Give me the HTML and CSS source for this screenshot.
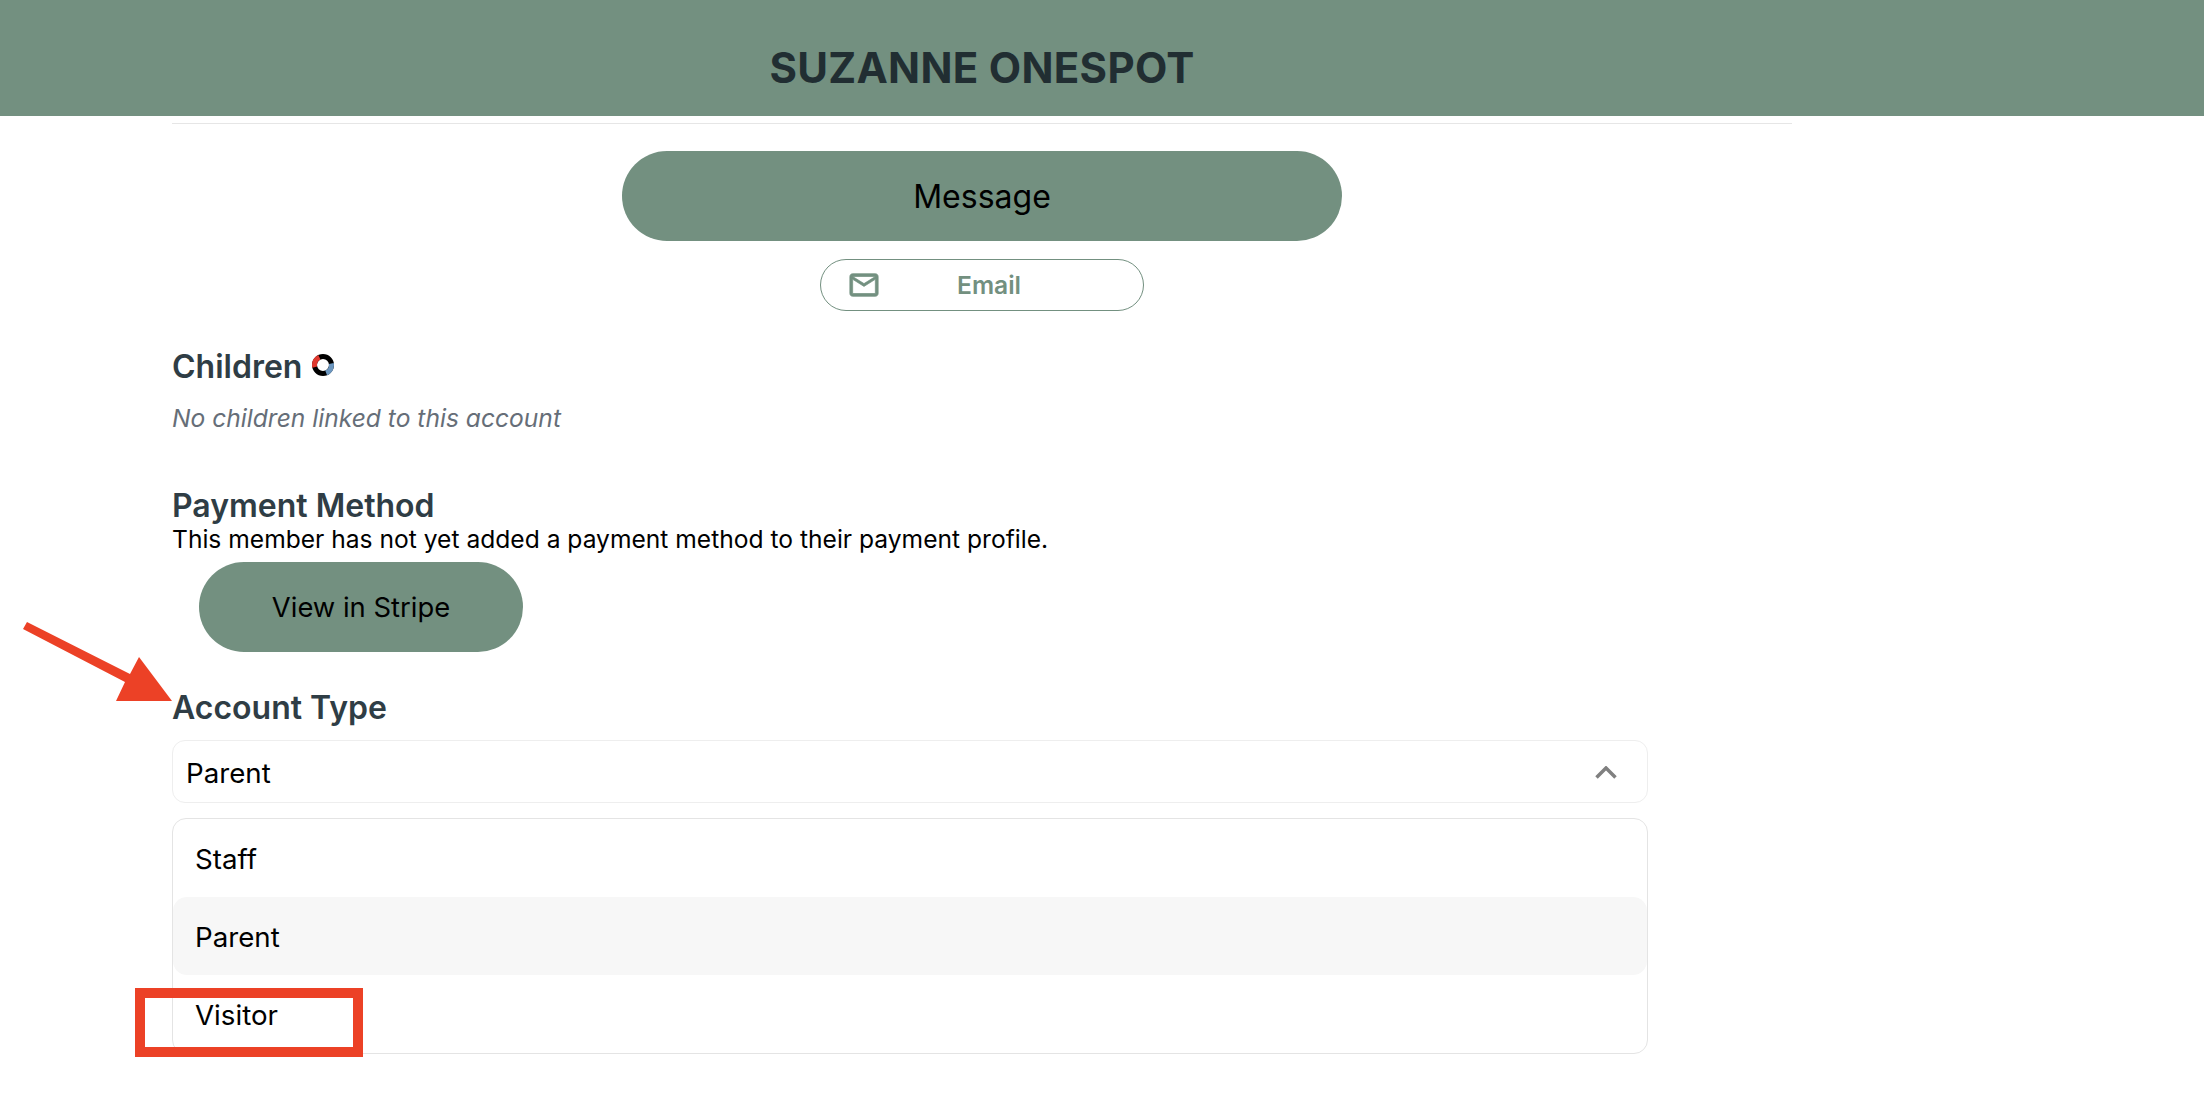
FILE: index.html
```html
<!DOCTYPE html>
<html lang="en">
<head>
<meta charset="utf-8">
<title>Suzanne Onespot</title>
<link rel="stylesheet" href="styles.css">
</head>
<body>
<header class="topbar"><h1 class="topbar-title">SUZANNE ONESPOT</h1></header>
<main class="content">
  <hr class="divider">
  <div class="actions">
    <button class="pill pill-message">Message</button>
    <button class="email-btn">
      <svg class="email-icon" viewBox="0 0 24 24"><path d="M20 4H4c-1.1 0-2 .9-2 2v12c0 1.1.9 2 2 2h16c1.1 0 2-.9 2-2V6c0-1.1-.9-2-2-2zm0 14H4V8l8 5 8-5v10zm-8-7L4 6h16l-8 5z"/></svg>
      <span class="email-label">Email</span>
    </button>
  </div>
  <section class="children">
    <h2 class="heading">Children
      <svg class="spinner" viewBox="0 0 22 22">
        <circle class="ring ring-black" cx="11" cy="11" r="8.5"/>
        <circle class="ring ring-red" cx="11" cy="11" r="8.5" pathLength="100" stroke-dasharray="22 78" stroke-dashoffset="-46"/>
        <circle class="ring ring-blue" cx="11" cy="11" r="8.5" pathLength="100" stroke-dasharray="22 78" stroke-dashoffset="3"/>
      </svg>
    </h2>
    <p class="empty">No children linked to this account</p>
  </section>
  <section class="payment">
    <h2 class="heading">Payment Method</h2>
    <p class="note">This member has not yet added a payment method to their payment profile.</p>
    <button class="pill pill-stripe">View in Stripe</button>
  </section>
  <section class="account">
    <h2 class="heading">Account Type</h2>
    <div class="select">
      <span>Parent</span>
      <svg class="chevron" viewBox="0 0 22 13"><path d="M1.5 11.5 11 2l9.500 9.500"/></svg>
    </div>
    <ul class="options">
      <li class="option">Staff</li>
      <li class="option option-active">Parent</li>
      <li class="option">Visitor</li>
    </ul>
  </section>
</main>
<svg class="annotation-arrow" viewBox="0 0 180 90"><path d="M27 0 23 7 125 60 116 79H172L139 35 130 52Z"/></svg>
<div class="annotation-box"></div>
</body>
</html>
```

FILE: styles.css
```css
* { box-sizing: border-box; }
html, body { margin: 0; padding: 0; }
body {
  font-family: Inter, "Liberation Sans", sans-serif;
  color: #000;
  background: #fff;
  height: 1096px;
  overflow: hidden;
  position: relative;
}
.topbar {
  height: 116px;
  background: #739080;
  display: flex;
  align-items: flex-end;
  justify-content: center;
  padding: 0 240px 20px 0;
}
.topbar-title {
  margin: 0;
  font-size: 42px;
  line-height: 56px;
  font-weight: 700;
  letter-spacing: 0.3px;
  color: #212e32;
}
.content { width: 1620px; margin-left: 172px; }
.divider {
  margin: 7px 0 0;
  height: 1px;
  border: 0;
  background: #e6e6e6;
}
.actions {
  display: flex;
  flex-direction: column;
  align-items: center;
  gap: 18px;
  padding-top: 27px;
}
button { font-family: inherit; border: 0; cursor: pointer; }
.pill {
  background: #739080;
  color: #000;
  border-radius: 45px;
  height: 90px;
}
.pill-message { width: 720px; font-size: 32px; }
.pill-stripe { width: 324px; font-size: 27.4px; margin: 8px 0 0 27px; display: block; }
.email-btn {
  width: 324px;
  height: 52px;
  border: 1px solid #739080;
  border-radius: 26px;
  background: #fff;
  color: #739080;
  display: flex;
  align-items: center;
  padding: 0 0 0 26px;
}
.email-icon { width: 34px; height: 34px; fill: #739080; stroke: #739080; stroke-width: 0.5; flex: none; }
.email-label { flex: 1; text-align: center; font-size: 24.6px; font-weight: 600; padding-right: 46px; }
.heading {
  margin: 0;
  font-size: 32px;
  line-height: 36px;
  font-weight: 600;
  color: #2f3d45;
}
.children { margin-top: 38px; }
.spinner { width: 22px; height: 22px; vertical-align: 2px; margin-left: 2px; }
.ring { fill: none; stroke-width: 5; stroke: #000; }
.ring-red { stroke: #e0382e; }
.ring-blue { stroke: #6c97c0; }
.empty {
  margin: 17px 0 0;
  font-size: 24.6px;
  line-height: 32px;
  font-style: italic;
  color: #666e78;
}
.payment { margin-top: 54px; }
.note { margin: 0; font-size: 24.6px; line-height: 30px; }
.account { margin-top: 38px; }
.select {
  width: 1476px;
  height: 63px;
  margin-top: 14px;
  border: 1px solid #eee;
  border-radius: 13px;
  display: flex;
  align-items: center;
  justify-content: space-between;
  padding: 2px 30px 0 13px;
  font-size: 27.7px;
}
.chevron { width: 22px; height: 13px; fill: none; stroke: #808080; stroke-width: 3.500; }
.options {
  list-style: none;
  width: 1476px;
  height: 236px;
  margin: 15px 0 0;
  padding: 0;
  border: 1px solid #e4e4e4;
  border-radius: 14px;
  display: grid;
  grid-auto-rows: 1fr;
  font-size: 27.7px;
}
.option { display: flex; align-items: center; padding: 2px 0 0 22px; border-radius: 14px; }
.option-active { background: #f7f7f7; }
.annotation-arrow {
  position: absolute;
  left: 0;
  top: 622px;
  width: 180px;
  height: 90px;
  fill: #ec4126;
}
.annotation-box {
  position: absolute;
  left: 135px;
  top: 988px;
  width: 228px;
  height: 69px;
  border: 10px solid #ec4126;
}
```
